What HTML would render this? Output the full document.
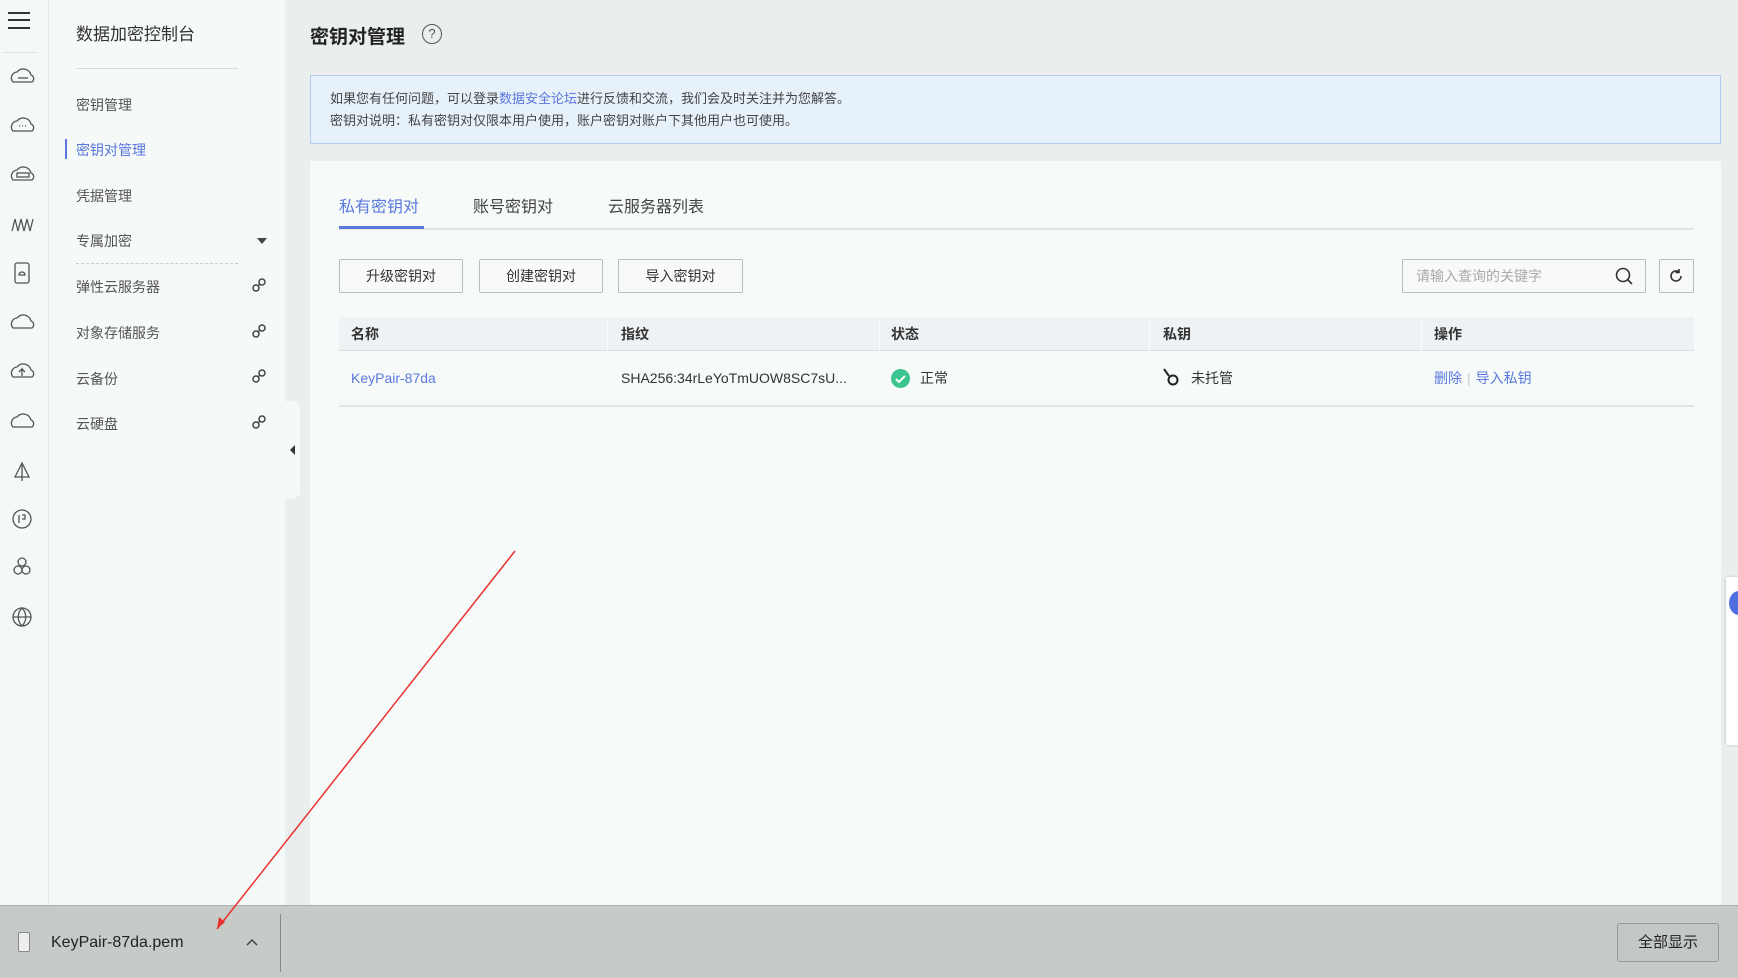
<!DOCTYPE html>
<html><head><meta charset="utf-8">
<style>
*{margin:0;padding:0;box-sizing:border-box}
body{width:1738px;height:978px;overflow:hidden;position:relative;background:#eaefee;font-family:"Liberation Sans","Noto Sans CJK SC",sans-serif;color:#333}
.abs{position:absolute}
#rail{left:0;top:0;width:49px;height:905px;background:#f4f8f6;border-right:1px solid #e3e7e6}
#menu{left:49px;top:0;width:236px;height:905px;background:#f5f9f7}
.mi{position:absolute;left:27px;font-size:14px;color:#555}
#card{left:310px;top:161px;width:1411px;height:744px;background:#f6faf8}
.btn{position:absolute;top:259px;height:34px;border:1px solid #b9bebd;background:#f7faf9;font-size:14px;color:#333;text-align:center;line-height:32px;border-radius:2px}
.th{position:absolute;top:317px;height:34px;line-height:34px;font-size:14px;font-weight:bold;color:#333}
.td{position:absolute;top:351px;height:55px;line-height:55px;font-size:14px;color:#333}
</style></head><body>
<div id="rail" class="abs">
 <div class="abs" style="left:8px;top:12px;width:22px;height:2px;background:#333"></div>
 <div class="abs" style="left:8px;top:19px;width:22px;height:2px;background:#333"></div>
 <div class="abs" style="left:8px;top:27px;width:22px;height:2px;background:#333"></div>
 <div class="abs" style="left:4px;top:52px;width:32px;height:1px;background:#dde2e1"></div>
 <svg class="abs" style="left:10px;top:65px" width="26" height="570" fill="none" stroke="#555" stroke-width="1.3">
  <path d="M3 17a6 6 0 0 1 4-10a8 8 0 0 1 14 3a4 4 0 0 1 1 7z"/><path d="M8 13h10"/>
  <path d="M3 66a6 6 0 0 1 4-10a8 8 0 0 1 14 3a4 4 0 0 1 1 7z"/><path d="M9 61h1M12 61h1M15 61h1"/>
  <path d="M3 115a6 6 0 0 1 4-10a8 8 0 0 1 14 3a4 4 0 0 1 1 7z"/><rect x="7" y="108" width="12" height="4"/>
  <path d="M2 166l3-12l3 12l3-12l3 12l3-12l3 12l3-12"/>
  <rect x="5" y="198" width="14" height="20" rx="2"/><path d="M9 210a3 3 0 0 1 6 0z"/>
  <path d="M3 263a6 6 0 0 1 4-10a8 8 0 0 1 14 3a4 4 0 0 1 1 7z"/>
  <path d="M3 312a6 6 0 0 1 4-10a8 8 0 0 1 14 3a4 4 0 0 1 1 7z"/><path d="M12 311v-7l-3 3M12 304l3 3"/>
  <path d="M3 362a6 6 0 0 1 4-10a8 8 0 0 1 14 3a4 4 0 0 1 1 7z"/>
  <path d="M12 398l-7 14h14zM12 398v18"/>
  <circle cx="12" cy="454" r="9"/><path d="M9 450v8M12 450h3v4h-3"/>
  <circle cx="12" cy="497" r="4"/><circle cx="8" cy="505" r="4"/><circle cx="16" cy="505" r="4"/>
  <circle cx="12" cy="552" r="9"/><path d="M3 552h18M12 543c-5 5-5 13 0 18c5-5 5-13 0-18"/>
 </svg>
</div>
<div id="menu" class="abs">
 <div class="abs" style="left:27px;top:20px;font-size:17px;color:#333">数据加密控制台</div>
 <div class="abs" style="left:27px;top:68px;width:162px;height:1px;background:#d5dbe3"></div>
 <div class="mi" style="top:95px">密钥管理</div>
 <div class="abs" style="left:16px;top:139px;width:2px;height:20px;background:#5a78dd"></div>
 <div class="mi" style="top:140px;color:#5a78dd">密钥对管理</div>
 <div class="mi" style="top:186px">凭据管理</div>
 <div class="mi" style="top:231px">专属加密</div>
 <div class="abs" style="left:208px;top:238px;width:0;height:0;border-left:5px solid transparent;border-right:5px solid transparent;border-top:6px solid #444"></div>
 <div class="abs" style="left:27px;top:263px;width:162px;border-top:1px dashed #c9cfcd"></div>
 <div class="mi" style="top:277px">弹性云服务器</div>
 <div class="mi" style="top:323px">对象存储服务</div>
 <div class="mi" style="top:369px">云备份</div>
 <div class="mi" style="top:414px">云硬盘</div>
 <svg class="abs" style="left:202px;top:277px" width="16" height="160" fill="none" stroke="#444" stroke-width="1.5">
  <circle cx="5" cy="11" r="3"/><circle cx="11" cy="5" r="3"/><path d="M7 9l2-2"/>
  <circle cx="5" cy="57" r="3"/><circle cx="11" cy="51" r="3"/><path d="M7 55l2-2"/>
  <circle cx="5" cy="102" r="3"/><circle cx="11" cy="96" r="3"/><path d="M7 100l2-2"/>
  <circle cx="5" cy="148" r="3"/><circle cx="11" cy="142" r="3"/><path d="M7 146l2-2"/>
 </svg>
</div>
<div class="abs" style="left:285px;top:401px;width:15px;height:98px;background:#f5f9f7;border-radius:0 8px 8px 0"></div>
<div class="abs" style="left:290px;top:445px;width:0;height:0;border-top:5px solid transparent;border-bottom:5px solid transparent;border-right:5px solid #333"></div>

<div class="abs" style="left:310px;top:22px;font-size:19px;font-weight:bold;color:#222">密钥对管理</div>
<div class="abs" style="left:422px;top:24px;width:20px;height:20px;border:1.5px solid #555;border-radius:50%;font-size:13px;text-align:center;line-height:17px;color:#555">?</div>
<div class="abs" style="left:310px;top:75px;width:1411px;height:69px;background:#e7f1fa;border:1px solid #b5cbee"></div>
<div class="abs" style="left:330px;top:88px;font-size:13px;color:#444">如果您有任何问题，可以登录<span style="color:#5a78dd">数据安全论坛</span>进行反馈和交流，我们会及时关注并为您解答。</div>
<div class="abs" style="left:330px;top:110px;font-size:13px;color:#444">密钥对说明：私有密钥对仅限本用户使用，账户密钥对账户下其他用户也可使用。</div>

<div id="card" class="abs"></div>
<div class="abs" style="left:339px;top:193px;font-size:16px;color:#5a78dd">私有密钥对</div>
<div class="abs" style="left:473px;top:193px;font-size:16px;color:#444">账号密钥对</div>
<div class="abs" style="left:608px;top:193px;font-size:16px;color:#444">云服务器列表</div>
<div class="abs" style="left:339px;top:228px;width:1355px;height:2px;background:#e1e6e4"></div>
<div class="abs" style="left:339px;top:226px;width:85px;height:3px;background:#5a78dd"></div>

<div class="btn" style="left:339px;width:124px">升级密钥对</div>
<div class="btn" style="left:479px;width:124px">创建密钥对</div>
<div class="btn" style="left:618px;width:125px">导入密钥对</div>
<div class="btn" style="left:1402px;width:244px;text-align:left;padding-left:13px;color:#aaa">请输入查询的关键字</div>
<svg class="abs" style="left:1614px;top:266px" width="20" height="20" fill="none" stroke="#333" stroke-width="1.6"><circle cx="9" cy="9" r="6.5"/><path d="M14 14l4 4"/></svg>
<div class="btn" style="left:1659px;width:35px"></div>
<svg class="abs" style="left:1668px;top:268px" width="16" height="16" fill="none" stroke="#333" stroke-width="1.6"><path d="M13 8a5 5 0 1 1-2-4M11 1v3.5h-3.5"/></svg>

<div class="abs" style="left:339px;top:317px;width:1355px;height:34px;background:#eef2f4;border-bottom:1px solid #d8dde0"></div>
<div class="abs" style="left:607px;top:317px;width:1px;height:34px;background:#f8fbfa"></div>
<div class="abs" style="left:879px;top:317px;width:1px;height:34px;background:#f8fbfa"></div>
<div class="abs" style="left:1149px;top:317px;width:1px;height:34px;background:#f8fbfa"></div>
<div class="abs" style="left:1421px;top:317px;width:1px;height:34px;background:#f8fbfa"></div>
<div class="th" style="left:351px">名称</div>
<div class="th" style="left:621px">指纹</div>
<div class="th" style="left:891px">状态</div>
<div class="th" style="left:1163px">私钥</div>
<div class="th" style="left:1434px">操作</div>
<div class="abs" style="left:339px;top:405px;width:1355px;height:2px;background:#e1e6e4"></div>
<div class="td" style="left:351px;color:#5a78dd">KeyPair-87da</div>
<div class="td" style="left:621px">SHA256:34rLeYoTmUOW8SC7sU...</div>
<div class="abs" style="left:891px;top:369px;width:19px;height:19px;border-radius:50%;background:#3cc48e"></div>
<svg class="abs" style="left:891px;top:369px" width="19" height="19" fill="none" stroke="#fff" stroke-width="2"><path d="M5 10l3 3l6-6"/></svg>
<div class="td" style="left:920px">正常</div>
<svg class="abs" style="left:1161px;top:366px" width="22" height="24" fill="none" stroke="#222" stroke-width="2"><path d="M3 3l5 7"/><circle cx="12" cy="14" r="4.5"/></svg>
<div class="td" style="left:1191px">未托管</div>
<div class="td" style="left:1434px;color:#5a78dd">删除<span style="color:#ccc;margin:0 5px">|</span>导入私钥</div>

<div class="abs" style="left:1726px;top:577px;width:12px;height:168px;background:#fff;box-shadow:0 0 3px #bbb"></div>
<div class="abs" style="left:1729px;top:591px;width:20px;height:24px;border-radius:50%;background:#4f6fe0"></div>

<div class="abs" style="left:0;top:905px;width:1738px;height:73px;background:#c6cbc7;border-top:1px solid #aab0ad"></div>
<div class="abs" style="left:18px;top:932px;width:12px;height:20px;border:1px solid #888;background:#eee;border-radius:2px"></div>
<div class="abs" style="left:51px;top:934px;font-size:16px;color:#222">KeyPair-87da.pem</div>
<svg class="abs" style="left:245px;top:937px" width="14" height="10" fill="none" stroke="#444" stroke-width="1.5"><path d="M2 8l5-5l5 5"/></svg>
<div class="abs" style="left:280px;top:914px;width:1px;height:58px;background:#888"></div>
<div class="abs" style="left:1617px;top:923px;width:102px;height:39px;border:1px solid #999;border-radius:3px;background:#c3c8c4;font-size:15px;line-height:37px;text-align:center;color:#222">全部显示</div>

<svg class="abs" style="left:0;top:0" width="1738" height="978"><path d="M515 551L217 929" stroke="#e8322f" stroke-width="1.5"/><path d="M217 929l2-12l6 5z" fill="#e8322f"/></svg>
</body></html>
